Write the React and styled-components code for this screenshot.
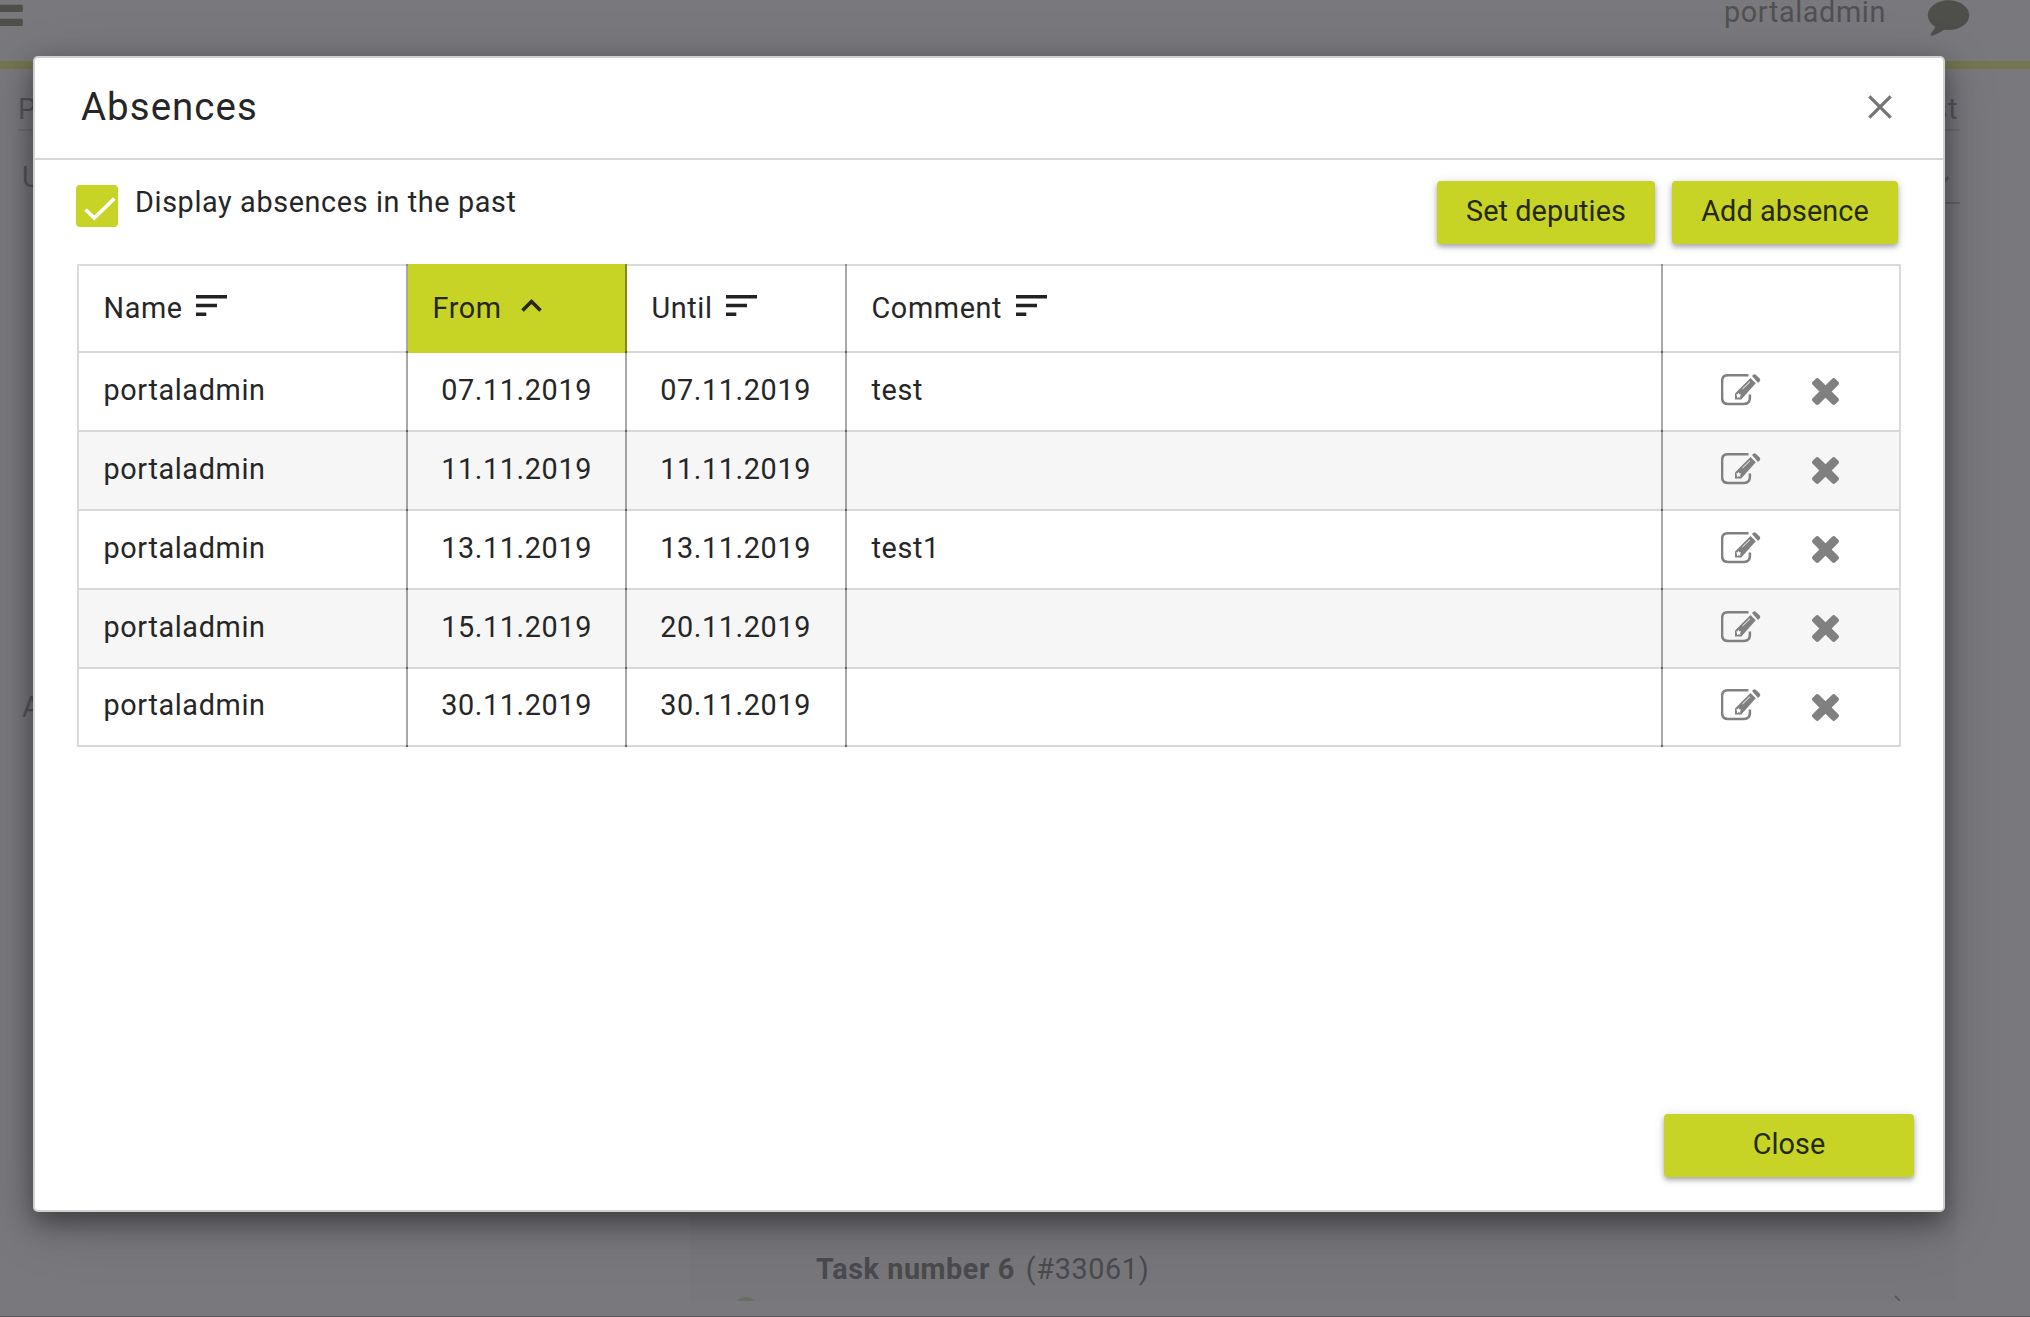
import React from 'react';
import styled, { createGlobalStyle } from 'styled-components';

const GlobalStyle = createGlobalStyle`
  * { box-sizing: border-box; }
  body { margin: 0; overflow: hidden; background: #79787d; }
`;

const lime = '#c7d425';

const Page = styled.div`
  position: relative;
  width: 2030px;
  height: 1317px;
  overflow: hidden;
  background: #79787d;
  border-bottom: 1px solid #5d5c60;
  font-family: Roboto, "Liberation Sans", sans-serif;
  font-size: 28.8px;
  letter-spacing: 0.62px;
  line-height: 34px;
  color: #262626;
`;

const Backdrop = styled.div`
  display: flex;
  flex-direction: column;
  height: 100%;
  color: #505053;
`;

const TopBar = styled.header`
  display: flex;
  justify-content: space-between;
  height: 69px;
  border-bottom: 8px solid #74764f;
`;

const User = styled.div`
  display: flex;
  align-items: flex-start;
  gap: 41px;
  padding-right: 60px;
`;

const UserName = styled.span`
  line-height: 25px;
`;

const Fields = styled.div`
  display: flex;
  flex: 1;
  justify-content: space-between;
  padding: 23px 70px 0 18px;
  color: #565559;
`;

const FieldColumn = styled.div`
  display: flex;
  flex-direction: column;
  width: 62px;
`;

const Field = styled.div`
  display: flex;
  justify-content: ${(p) => (p.$end ? 'flex-end' : 'flex-start')};
  height: ${(p) => p.$height || 44}px;
  margin-top: ${(p) => p.$space || 0}px;
  padding: 0 ${(p) => (p.$end ? p.$inset : 0)}px 0 ${(p) => (p.$end ? 0 : p.$inset)}px;
  border-bottom: 2px solid ${(p) => p.$line || 'transparent'};
`;

const TaskCard = styled.div`
  display: flex;
  align-items: flex-end;
  height: 101px;
  width: 1266px;
  margin: 0 0 15px 690px;
  background: #77767b;
  color: #4a4a4d;
  overflow: hidden;
`;

const StatusDot = styled.i`
  width: 24px;
  height: 24px;
  margin: 0 58px -20px 44px;
  border-radius: 50%;
  background: #66705f;
`;

const TaskTitle = styled.div`
  display: flex;
  flex: 1;
  gap: 11px;
  padding-bottom: 15px;
`;

const TaskName = styled.b`
  letter-spacing: 0.55px;
`;

const Dialog = styled.section`
  position: absolute;
  left: 33px;
  top: 56px;
  width: 1912px;
  height: 1156px;
  display: flex;
  flex-direction: column;
  background: #fff;
  border: 2px solid #d0d0d1;
  border-radius: 5px;
  box-shadow: 0 10px 26px rgba(0, 0, 0, 0.42), 0 14px 60px rgba(0, 0, 0, 0.16);
`;

const DialogHeader = styled.header`
  display: flex;
  align-items: center;
  justify-content: space-between;
  height: 102px;
  padding: 0 51px 2px 46px;
  border-bottom: 2px solid #d8d8d8;
`;

const Title = styled.h1`
  margin: 0;
  font-size: 38.4px;
  font-weight: 400;
  letter-spacing: 1.08px;
`;

const Toolbar = styled.div`
  display: flex;
  align-items: flex-start;
  justify-content: space-between;
  height: 104px;
  padding: 21px 45px 0 41px;
`;

const CheckLabel = styled.label`
  display: flex;
  gap: 17px;
  padding-top: 4px;
`;

const CheckBox = styled.span`
  display: flex;
  width: 42px;
  height: 42px;
  border-radius: 4px;
  background: ${lime};
`;

const Actions = styled.div`
  display: flex;
  gap: 17px;
`;

const Button = styled.button`
  width: ${(p) => p.$width}px;
  height: 63px;
  padding: 0 0 4px;
  border: 0;
  border-radius: 4px;
  background: ${lime};
  color: #26280c;
  font: inherit;
  letter-spacing: 0.08px;
  box-shadow: 0 3px 5px rgba(0, 0, 0, 0.28), 0 1px 12px rgba(0, 0, 0, 0.12);
`;

const Table = styled.div`
  display: flex;
  flex-direction: column;
  width: 1824px;
  margin-left: 42px;
  border: 2px solid #dadada;
  border-top: 0;
  border-bottom: 0;
`;

const Row = styled.div`
  display: grid;
  grid-template-columns: 329px 219px 220px 816px 1fr;
  height: ${(p) => p.$height}px;
  background: ${(p) => (p.$odd ? '#f6f6f6' : '#fff')};
  box-shadow: inset 0 -2px #d8d8d8 ${(p) => (p.$head ? ', inset 0 2px #dadada' : '')};
`;

const Cell = styled.div`
  display: flex;
  align-items: center;
  padding: 0 24px 6px 24.5px;
  border-right: 2px solid rgba(0, 0, 0, 0.34);
  background: linear-gradient(rgba(0, 0, 0, 0.3), rgba(0, 0, 0, 0.3)) right bottom / 2px 2px no-repeat border-box;
  &:last-child {
    border-right: 0;
    background: none;
  }
`;

const DateCell = styled(Cell)`
  justify-content: flex-end;
  padding-right: ${(p) => p.$inset || 33}px;
`;

const HeadCell = styled(Cell)`
  gap: ${(p) => p.$gap || 13.5}px;
  padding-bottom: 1px;
  ${(p) => p.$active && `background-color: ${lime};`}
`;

const SortMark = styled.span`
  display: flex;
  padding-bottom: 5px;
`;

const Icons = styled.div`
  display: flex;
  align-items: center;
  gap: 51px;
  padding-left: 33.5px;
`;

const DeleteMark = styled.span`
  display: flex;
  padding-top: 4px;
`;

const Footer = styled.footer`
  display: flex;
  justify-content: flex-end;
  margin-top: auto;
  padding: 0 29px 33px 0;
`;

const SortIcon = () => (
  <SortMark>
    <svg width="31" height="21" viewBox="0 0 31 21" fill="#222">
      <path d="M0 0h31v3.500H0zM0 8.700h21v3.500H0zM0 17.400h10.300v3.500H0z" />
    </svg>
  </SortMark>
);

const SortUpIcon = () => (
  <SortMark>
    <svg width="21" height="13" viewBox="0 0 21 13" fill="none" stroke="#26280c" strokeWidth="3.600">
      <path d="M1.500 11.500 10.500 2.500l9 9" />
    </svg>
  </SortMark>
);

const EditIcon = () => (
  <svg width="40" height="32" viewBox="0 0 40 32" fill="#808080">
    <path d="M27.500 1.300H7Q1.100 1.300 1.100 7v17q0 5.900 5.900 5.900h16q5.900 0 5.900-5.900v-3.500" fill="none" stroke="#808080" strokeWidth="2.500" />
    <path d="M14 19.500 29.500 4l5.300 5.200L20.300 25.500H14z" />
    <path d="m31 2 1.300-1.200q1.500-1 2.700.1L38.700 4.500q1.100 1.300 0 2.800L37 9z" />
    <path d="m17.300 18.800.9 1.500 1.900.3-1 1.400.3 1.800-1.700-.5-1.700.7v-1.900l-.9-1.500 1.700-.3z" fill="#fff" />
    <path d="m21.500 15 7.500-7.300" stroke="#fff" strokeWidth="1" />
  </svg>
);

const DeleteIcon = () => (
  <DeleteMark>
    <svg width="27" height="27" viewBox="302 366 1188 1188" fill="#808080">
      <path d="M1490 1322q0 40-28 68l-136 136q-28 28-68 28t-68-28l-294-294-294 294q-28 28-68 28t-68-28l-136-136q-28-28-28-68t28-68l294-294-294-294q-28-28-28-68t28-68l136-136q28-28 68-28t68 28l294 294 294-294q28-28 68-28t68 28l136 136q28 28 28 68t-28 68l-294 294 294 294q28 28 28 68z" />
    </svg>
  </DeleteMark>
);

const CloseIcon = () => (
  <svg width="24" height="24" viewBox="0 0 24 24" stroke="#757575" strokeWidth="3.200">
    <path d="m1.300 1.300 21.400 21.400M22.700 1.300 1.300 22.700" />
  </svg>
);

const CheckIcon = () => (
  <svg width="42" height="42" viewBox="0 0 42 42" fill="none" stroke="#fff" strokeWidth="3.600">
    <path d="m9.500 24.500 8.800 8.500 20-19.500" />
  </svg>
);

const MenuIcon = () => (
  <svg width="23" height="27" viewBox="0 0 23 27" fill="#4e4e4a">
    <rect x="-6" y="4.700" width="28.800" height="7.200" rx="1.500" />
    <rect x="-6" y="18.800" width="28.800" height="7.200" rx="1.500" />
  </svg>
);

const ChatIcon = () => (
  <svg width="43" height="37" viewBox="0 0 43 37" fill="#4e4e4a">
    <ellipse cx="21.500" cy="15.200" rx="20.700" ry="14.900" />
    <path d="M7.500 24q2 3.500-2.500 8-1.800 1.800-1.300 3 .4 1 1.800.8 5.500-1.800 12-6.300z" />
  </svg>
);

const ChevronEnd = styled.i`
  width: 12px;
  height: 12px;
  margin-top: 12px;
  border: solid #5c5b5f;
  border-width: 0 3px 3px 0;
  transform: rotate(45deg);
`;

const absences = [
  ['07.11.2019', '07.11.2019', 'test'],
  ['11.11.2019', '11.11.2019', ''],
  ['13.11.2019', '13.11.2019', 'test1'],
  ['15.11.2019', '20.11.2019', ''],
  ['30.11.2019', '30.11.2019', ''],
];

export default function App() {
  return (
    <Page>
      <GlobalStyle />
      <Backdrop>
        <TopBar>
          <MenuIcon />
          <User>
            <UserName>portaladmin</UserName>
            <ChatIcon />
          </User>
        </TopBar>
        <Fields>
          <FieldColumn>
            <Field $height={39} $line="#6f6e73" $inset={0}>P</Field>
            <Field $space={29} $inset={4}>U</Field>
            <Field $space={486} $inset={4}>A</Field>
          </FieldColumn>
          <FieldColumn>
            <Field $end $height={39} $line="#6f6e73" $inset={2}>st</Field>
            <Field $end $space={29} $line="#656469" $inset={13}><ChevronEnd /></Field>
          </FieldColumn>
        </Fields>
        <TaskCard>
          <StatusDot />
          <TaskTitle><TaskName>Task number 6</TaskName><span>(#33061)</span></TaskTitle>
          <svg width="70" height="6" viewBox="0 0 70 6" stroke="#59585c" strokeWidth="2">
            <path d="m9 1 5 5" />
          </svg>
        </TaskCard>
      </Backdrop>
      <Dialog>
        <DialogHeader>
          <Title>Absences</Title>
          <CloseIcon />
        </DialogHeader>
        <Toolbar>
          <CheckLabel>
            <CheckBox><CheckIcon /></CheckBox>
            Display absences in the past
          </CheckLabel>
          <Actions>
            <Button $width={218}>Set deputies</Button>
            <Button $width={226}>Add absence</Button>
          </Actions>
        </Toolbar>
        <Table>
          <Row $head $height={89}>
            <HeadCell>Name <SortIcon /></HeadCell>
            <HeadCell $active $gap={19}>From <SortUpIcon /></HeadCell>
            <HeadCell>Until <SortIcon /></HeadCell>
            <HeadCell>Comment <SortIcon /></HeadCell>
            <HeadCell />
          </Row>
          {absences.map(([from, until, comment], i) => (
            <Row key={from} $height={i === absences.length - 1 ? 78 : 79} $odd={i % 2 === 1}>
              <Cell>portaladmin</Cell>
              <DateCell>{from}</DateCell>
              <DateCell $inset={34}>{until}</DateCell>
              <Cell>{comment}</Cell>
              <Cell><Icons><EditIcon /><DeleteIcon /></Icons></Cell>
            </Row>
          ))}
        </Table>
        <Footer>
          <Button $width={250}>Close</Button>
        </Footer>
      </Dialog>
    </Page>
  );
}
